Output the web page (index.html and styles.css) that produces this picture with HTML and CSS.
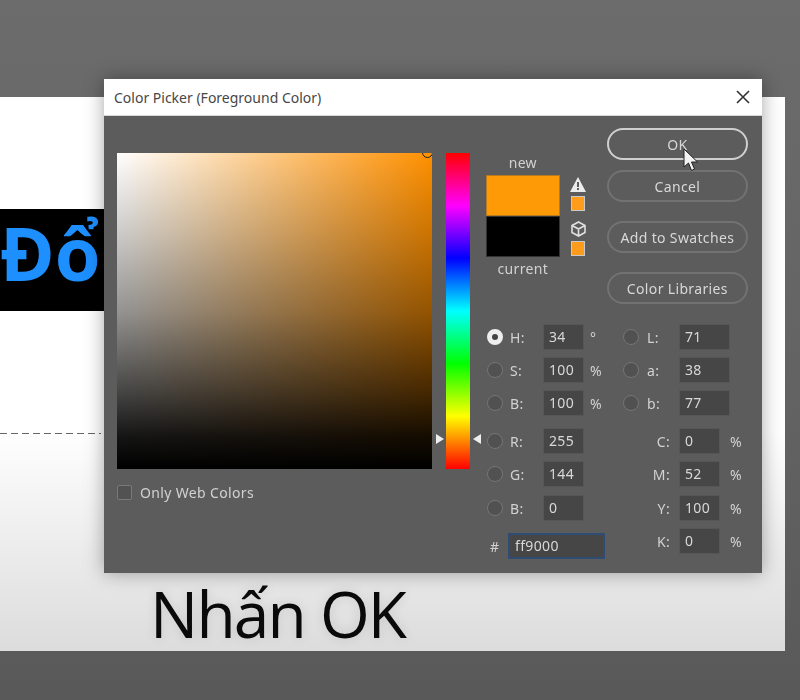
FILE: index.html
```html
<!DOCTYPE html>
<html lang="vi">
<head>
  <meta charset="UTF-8" />
  <title>Color Picker</title>
  <link rel="stylesheet" href="styles.css">
</head>
<body>
  <div class="canvas">
    <div class="sample">Đổ</div>
    <div class="guide"></div>
    <div class="caption">Nhấn OK</div>
  </div>

  <div class="dialog">
    <div class="titlebar">
      <span>Color Picker (Foreground Color)</span>
      <svg class="close" width="16" height="16" viewBox="0 0 16 16"><path d="M2 2 L14 14 M14 2 L2 14" /></svg>
    </div>
    <div class="dialog-body">
      <div class="field-col">
        <div class="field"><span class="field-marker"></span></div>
        <label class="web-only"><span class="checkbox"></span>Only Web Colors</label>
      </div>

      <div class="hue">
        <span class="hue-arrow hue-arrow-left"></span>
        <span class="hue-arrow hue-arrow-right"></span>
      </div>

      <div class="right-col">
        <div class="top-row">
          <div class="preview">
            <div class="preview-label preview-new">new</div>
            <div class="swatch swatch-new"></div>
            <div class="swatch swatch-current"></div>
            <div class="preview-label preview-current">current</div>
          </div>
          <div class="alerts">
            <svg width="16" height="15" viewBox="0 0 16 15"><path fill="#ececec" d="M8 0 L16 15 H0 Z" /><path fill="#5c5c5c" d="M7 5 H9 V10 H7 Z M7 11 H9 V13 H7 Z" /></svg>
            <span class="mini-swatch"></span>
            <svg class="cube" width="15" height="16" viewBox="0 0 15 16"><path d="M7.5 1 L14 4.5 V11.5 L7.5 15 L1 11.5 V4.5 Z M1 4.5 L7.5 8 L14 4.5 M7.5 8 V15" /></svg>
            <span class="mini-swatch"></span>
          </div>
          <div class="buttons">
            <button class="btn btn-default">OK</button>
            <button class="btn">Cancel</button>
            <button class="btn btn-gap">Add to Swatches</button>
            <button class="btn btn-gap">Color Libraries</button>
          </div>
        </div>

        <div class="values">
          <div class="values-left">
            <div class="row"><span class="radio radio-on"></span><span class="lbl">H:</span><span class="input">34</span><span class="unit">°</span></div>
            <div class="row"><span class="radio"></span><span class="lbl">S:</span><span class="input">100</span><span class="unit">%</span></div>
            <div class="row"><span class="radio"></span><span class="lbl">B:</span><span class="input">100</span><span class="unit">%</span></div>
            <div class="row row-group"><span class="radio"></span><span class="lbl">R:</span><span class="input">255</span></div>
            <div class="row row-tall"><span class="radio"></span><span class="lbl">G:</span><span class="input">144</span></div>
            <div class="row"><span class="radio"></span><span class="lbl">B:</span><span class="input">0</span></div>
            <div class="row row-group"><span class="hash">#</span><span class="input input-hex">ff9000</span></div>
          </div>
          <div class="values-right">
            <div class="row"><span class="radio"></span><span class="lbl lbl-lab">L:</span><span class="input input-wide">71</span></div>
            <div class="row"><span class="radio"></span><span class="lbl lbl-lab">a:</span><span class="input input-wide">38</span></div>
            <div class="row"><span class="radio"></span><span class="lbl lbl-lab">b:</span><span class="input input-wide">77</span></div>
            <div class="row row-group"><span class="lbl lbl-cmyk">C:</span><span class="input">0</span><span class="unit unit-cmyk">%</span></div>
            <div class="row row-tall"><span class="lbl lbl-cmyk">M:</span><span class="input">52</span><span class="unit unit-cmyk">%</span></div>
            <div class="row"><span class="lbl lbl-cmyk">Y:</span><span class="input">100</span><span class="unit unit-cmyk">%</span></div>
            <div class="row"><span class="lbl lbl-cmyk">K:</span><span class="input">0</span><span class="unit unit-cmyk">%</span></div>
          </div>
        </div>
      </div>
    </div>
  </div>

  <svg class="cursor" width="16" height="24" viewBox="0 0 16 24"><path d="M1 1 V19 L5.5 15 L8.5 22.5 L11.5 21 L8.5 14 H14.5 Z" /></svg>
</body>
</html>
```

FILE: styles.css
```css
html, body {
  height: 100%;
}

body {
  margin: 0;
  padding-top: 97px;
  box-sizing: border-box;
  height: 700px;
  overflow: hidden;
  position: relative;
  background: linear-gradient(to bottom, #6c6c6c, #626262 60%, #595959);
  font-family: "Noto Sans", sans-serif;
  font-size: 14px;
  color: #d2d2d2;
}

/* the reference is a video frame, everything is a bit soft */
.canvas,
.dialog {
  filter: blur(0.4px);
}

/* document behind the dialog */
.canvas {
  position: relative;
  width: 785px;
  height: 554px;
  background: linear-gradient(to bottom, #fff 60%, #dcdcdc 100%);
}

.sample {
  position: absolute;
  left: 0;
  top: 112px;
  width: 104px;
  height: 102px;
  background: #000;
  color: #1e8fff;
  font-size: 74px;
  font-weight: 700;
  line-height: 88px;
  font-family: "Open Sans", sans-serif;
}

.guide {
  position: absolute;
  left: 0;
  top: 336px;
  width: 101px;
  height: 1px;
  background: repeating-linear-gradient(to right, #666 0, #666 7px, transparent 7px, transparent 11px);
}

.caption {
  position: absolute;
  left: 150px;
  top: 481px;
  font-family: "Open Sans", sans-serif;
  font-size: 64px;
  letter-spacing: -1.8px;
  line-height: 72px;
  color: #0a0a0a;
  text-shadow: 0 0 12px rgba(0, 0, 0, 0.12);
}

/* dialog */
.dialog {
  position: absolute;
  left: 104px;
  top: 79px;
  width: 658px;
  height: 494px;
  background: #5c5c5c;
  box-shadow: 0 0 18px rgba(0, 0, 0, 0.35);
}

.titlebar {
  height: 36px;
  background: #fff;
  border-bottom: 1px solid #d8d8d8;
  padding: 0 11px 0 10px;
  display: flex;
  align-items: center;
  justify-content: space-between;
  color: #474747;
}

.close path {
  stroke: #333;
  stroke-width: 1.6;
  fill: none;
}

.dialog-body {
  display: flex;
  padding: 12px 0 0 13px;
  letter-spacing: 0.35px;
}

.field-col {
  width: 315px;
  margin-top: 25px;
}

.field {
  position: relative;
  height: 316px;
  overflow: hidden;
  background:
    linear-gradient(to bottom, rgba(0, 0, 0, 0) 0%, rgba(0, 0, 0, 0.2) 25%, rgba(0, 0, 0, 0.42) 50%, rgba(0, 0, 0, 0.72) 75%, rgba(0, 0, 0, 0.92) 90%, #000 100%),
    linear-gradient(to right, #fff, #ff9000);
}

.field-marker {
  position: absolute;
  right: -1px;
  top: -6px;
  width: 9px;
  height: 9px;
  border: 1px solid #222;
  border-radius: 50%;
}

.web-only {
  display: flex;
  align-items: center;
  gap: 8px;
  margin-top: 14px;
}

.checkbox {
  width: 13px;
  height: 13px;
  border: 1px solid #797979;
  border-radius: 2px;
  background: #525252;
}

.hue {
  position: relative;
  width: 24px;
  height: 316px;
  margin: 25px 0 0 14px;
  background: linear-gradient(to top, #f00 0%, #ff0 16.7%, #0f0 33.3%, #0ff 50%, #00f 66.7%, #f0f 83.3%, #f00 100%);
}

.hue-arrow {
  position: absolute;
  top: 281px;
  border-top: 5px solid transparent;
  border-bottom: 5px solid transparent;
}

.hue-arrow-left {
  left: -10px;
  border-left: 8px solid #eee;
}

.hue-arrow-right {
  right: -11px;
  border-right: 8px solid #eee;
}

.right-col {
  margin-left: 16px;
  width: 262px;
}

.top-row {
  display: flex;
}

.preview {
  width: 74px;
  margin-top: 24px;
  text-align: center;
}

.preview-label {
  line-height: 22px;
}

.preview-new {
  margin-bottom: 1px;
}

.preview-current {
  margin-top: 1px;
}

.swatch {
  height: 41px;
  border: 1px solid #333;
  box-sizing: border-box;
}

.swatch-new {
  background: #ff9a07;
  border-color: #b87a20;
}

.swatch-current {
  background: #000;
}

.alerts {
  width: 15px;
  margin: 49px 0 0 11px;
  display: flex;
  flex-direction: column;
  align-items: center;
}

.mini-swatch {
  display: block;
  width: 12px;
  height: 13px;
  margin: 4px 0 10px;
  background: #ff9c1c;
  border: 1px solid #c9c9c9;
}

.cube path {
  stroke: #e0e0e0;
  stroke-width: 1.6;
  fill: none;
}

.buttons {
  width: 142px;
  margin-left: 21px;
  display: flex;
  flex-direction: column;
  gap: 10px;
}

.btn {
  height: 32px;
  padding: 0;
  border: 2px solid #727272;
  border-radius: 16px;
  background: transparent;
  color: #d8d8d8;
  font: inherit;
  letter-spacing: inherit;
  text-align: center;
}

.btn-default {
  border-color: #cfcfcf;
}

.btn-gap {
  margin-top: 9px;
}

/* number fields */
.values {
  display: flex;
  margin-top: 20px;
  padding-left: 1px;
}

.values-left {
  width: 136px;
}

.row {
  display: flex;
  align-items: center;
  height: 26px;
  margin-bottom: 7px;
}

.row-group {
  margin-top: 12px;
}

.row-tall {
  margin-bottom: 8px;
}

.radio {
  width: 14px;
  height: 14px;
  flex: none;
  border: 1px solid #757575;
  border-radius: 50%;
  background: #515151;
}

.radio-on {
  width: 6px;
  height: 6px;
  border: 5px solid #eee;
  background: #444;
}

.lbl {
  width: 40px;
  padding-left: 7px;
  box-sizing: border-box;
}

.input {
  width: 41px;
  height: 26px;
  box-sizing: border-box;
  padding-left: 5px;
  line-height: 24px;
  background: #464646;
  border: 1px solid #565656;
  color: #d8d8d8;
}

.unit {
  margin-left: 6px;
}

.hash {
  width: 21px;
  padding-left: 3px;
  box-sizing: border-box;
}

.input-hex {
  width: 97px;
  border: 2px solid #2f4d74;
  line-height: 22px;
}

.lbl-lab {
  width: 40px;
  padding-left: 8px;
}

.input-wide {
  width: 51px;
}

.lbl-cmyk {
  width: 56px;
  text-align: right;
  padding-right: 9px;
}

.unit-cmyk {
  margin-left: 10px;
}

.cursor {
  position: absolute;
  left: 683px;
  top: 148px;
}

.cursor path {
  fill: #f2f2f2;
  stroke: #222;
  stroke-width: 1;
}
```
